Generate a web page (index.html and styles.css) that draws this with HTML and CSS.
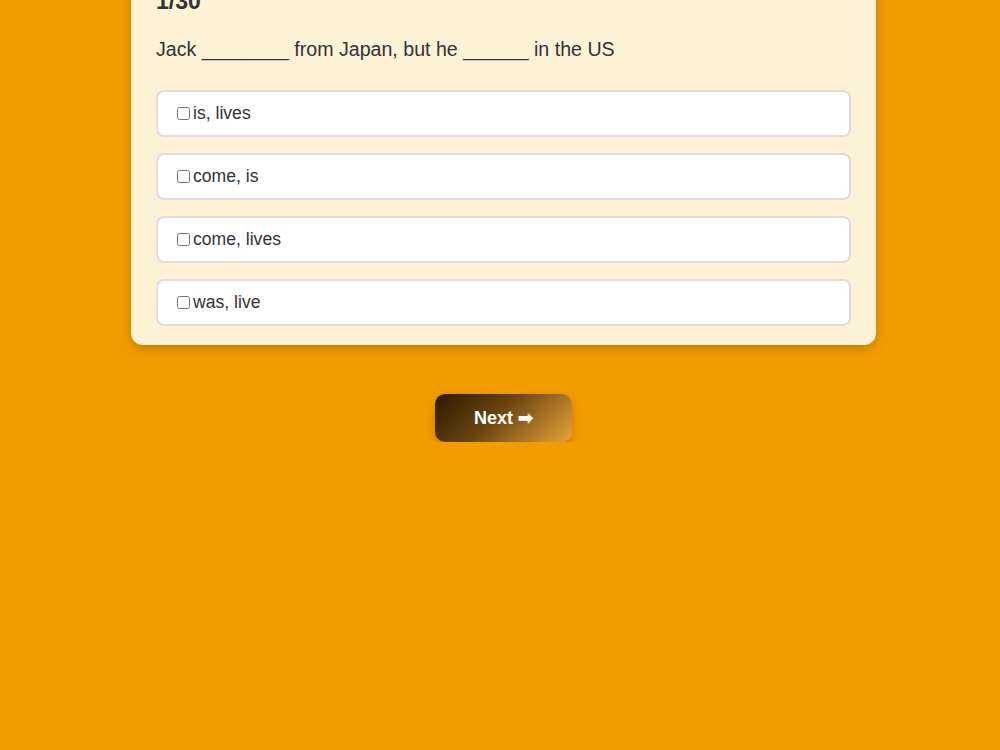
FILE: index.html
```html
<!DOCTYPE html>
<html lang="en">
<head>
    <meta charset="UTF-8">
    <meta name="viewport" content="width=device-width, initial-scale=1.0">
    <title>Quiz</title>
    <link rel="stylesheet" href="styles.css">
</head>
<body>
    <div class="quiz">
        <div class="quiz-card">
            <h2 class="counter">1/30</h2>
            <p class="question">Jack ________ from Japan, but he ______ in the US</p>

            <label class="option"><input type="checkbox">is, lives</label>
            <label class="option"><input type="checkbox">come, is</label>
            <label class="option"><input type="checkbox">come, lives</label>
            <label class="option"><input type="checkbox">was, live</label>
        </div>
        <button class="next-button">Next &#10145;</button>
    </div>
</body>
</html>
```

FILE: styles.css
```css
body {
    font-family: 'Liberation Sans', Arial, sans-serif;
    background-color: #f39c00;
    color: #333;
    margin: 0;
    padding: 0;
}
.quiz {
    display: flex;
    flex-direction: column;
    align-items: center;
    margin-top: -37px;
    padding-left: 7px;
}
.quiz-card {
    width: 745px;
    box-sizing: border-box;
    background-color: #fdf1d6;
    border-radius: 12px;
    padding: 25px 25px 19px;
    box-shadow: 0 4px 12px rgba(0, 0, 0, 0.2);
}
.counter {
    font-size: 23px;
    margin: 0 0 23px;
}
.question {
    font-size: 19.6px;
    margin: 0 0 29px;
}
.option {
    display: flex;
    align-items: center;
    background-color: #fff;
    border: 2px solid #ddd;
    border-radius: 8px;
    padding: 11px 16px;
    margin-bottom: 16px;
    font-size: 17.6px;
    cursor: pointer;
}
.option:last-child {
    margin-bottom: 0;
}
.option input {
    margin: 0 3px 0 3px;
}
.next-button {
    margin-top: 49px;
    width: 137px;
    height: 48px;
    border: none;
    border-radius: 10px;
    background: linear-gradient(135deg, #2a1a00, #6b4510 45%, #e9a43a);
    color: #fff;
    font-family: inherit;
    font-size: 18px;
    font-weight: bold;
    box-shadow: 0 4px 10px rgba(0, 0, 0, 0.2);
    cursor: pointer;
}
```
